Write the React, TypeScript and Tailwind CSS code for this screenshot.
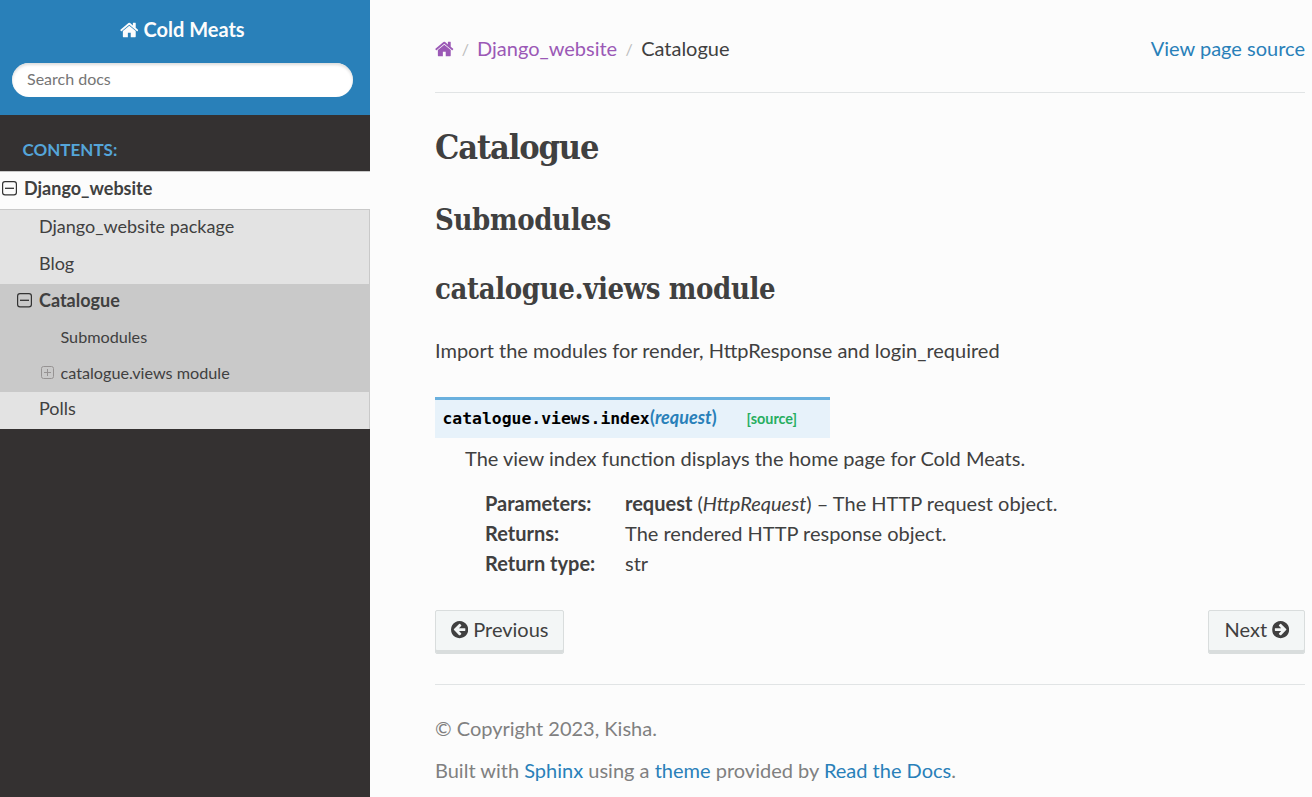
import React from "react";

const HOME =
  "M1408 992v480q0 26-19 45t-45 19h-384v-384h-256v384h-384q-26 0-45-19t-19-45v-480q0-1 .5-3t.5-3l575-474 575 474q1 2 1 6zm223-69l-62 74q-8 9-21 11h-3q-13 0-21-7l-692-577-692 577q-12 8-24 7-13-2-21-11l-62-74q-8-10-7-23.5t11-21.5l719-599q32-26 76-26t76 26l244 204v-195q0-14 9-23t23-9h192q14 0 23 9t9 23v408l219 182q10 8 11 21.5t-7 23.5z";
const ARROW =
  "M1408 960v-128q0-26-19-45t-45-19h-502l189-189q19-19 19-45t-19-45l-91-91q-18-18-45-18t-45 18l-362 362-91 91q-18 18-18 45t18 45l91 91 362 362q18 18 45 18t45-18l91-91q18-18 18-45t-18-45l-189-189h502q26 0 45-19t19-45zm256-64q0 209-103 385.5t-279.5 279.5-385.5 103-385.5-103-279.5-279.5-103-385.5 103-385.5 279.5-279.5 385.5-103 385.5 103 279.5 279.5 103 385.5z";

function HomeIcon({ className = "" }: { className?: string }) {
  return (
    <svg viewBox="0 0 1664 1792" className={`h-5 w-[18.6px] shrink-0 fill-current ${className}`}>
      <path d={HOME} />
    </svg>
  );
}

function ArrowIcon({ className = "" }: { className?: string }) {
  return (
    <svg viewBox="128 128 1536 1536" className={`size-[17.2px] shrink-0 fill-current ${className}`}>
      <path d={ARROW} />
    </svg>
  );
}

function Toggle({ open }: { open: boolean }) {
  return open ? (
    <svg viewBox="0 0 15 15" className="size-[15px] shrink-0 text-[#333333]" fill="none" stroke="currentColor">
      <rect x="0.6" y="0.6" width="13.8" height="13.3" rx="2.4" strokeWidth="1.2" />
      <path d="M3 7.3h9" strokeWidth="1.3" />
    </svg>
  ) : (
    <svg viewBox="0 0 13 13" className="size-[13px] shrink-0 text-[#969393]" fill="none" stroke="currentColor">
      <rect x="0.5" y="0.5" width="12" height="12" rx="2" />
      <path d="M3 6.5h7M6.5 3v7" />
    </svg>
  );
}

function Sidebar() {
  return (
    <nav className="flex w-[370px] shrink-0 flex-col bg-[#343131] text-lg text-[#404040]">
      <header className="h-[115px] bg-[#2980b9] pt-[15px]">
        <a className="flex h-[30px] w-[364.5px] items-center justify-center gap-[5px] text-xl font-bold text-[#fcfcfc]">
          <HomeIcon />
          <span className="pb-0.5">Cold Meats</span>
        </a>
        <input
          placeholder="Search docs"
          className="mt-[18px] ml-3 block h-[34px] w-[341px] rounded-full bg-white px-[15px] pb-[3px] text-base shadow-[inset_0_2px_3px_#ddd] placeholder:text-[#757575]"
        />
      </header>
      <p className="flex h-14 items-center pt-[15px] pl-[22.5px] text-[17px] font-bold text-[#55a5d9]">CONTENTS:</p>
      <a className="flex h-[38px] items-center gap-[7px] border-t border-[#c9c9c9] bg-[#fcfcfc] pb-[5px] pl-[2px] font-bold">
        <Toggle open />
        <span>Django_website</span>
      </a>
      <div className="flex h-[75px] flex-col border-t border-r border-[#c9c9c9] bg-[#e3e3e3] pl-[39px]">
        <a className="flex h-[37px] items-center pb-[5px]">Django_website package</a>
        <a className="flex h-[37px] items-center pb-[5px]">Blog</a>
      </div>
      <div className="h-[108px] bg-[#c9c9c9] text-[16.2px]">
        <a className="flex h-9 items-center gap-[7px] pb-[4px] pl-[17px] text-lg font-bold">
          <Toggle open />
          <span className="pb-px">Catalogue</span>
        </a>
        <a className="flex h-9 items-center pb-[3px] pl-[60.5px]">Submodules</a>
        <a className="flex h-9 items-center gap-[6.5px] pb-[3px] pl-[41px]">
          <Toggle open={false} />
          <span>catalogue.views module</span>
        </a>
      </div>
      <a className="flex h-[37px] items-center border-r border-[#c9c9c9] bg-[#e3e3e3] pb-[5px] pl-[39px]">Polls</a>
    </nav>
  );
}

const fields = [
  { name: "Parameters:", body: <><strong>request</strong> (<em>HttpRequest</em>) – The HTTP request object.</> },
  { name: "Returns:", body: "The rendered HTTP response object." },
  { name: "Return type:", body: "str" },
];

const slab = "font-['Roboto_Slab','DejaVu_Serif',serif] font-bold [font-stretch:condensed]";
const button =
  "flex h-11 items-center gap-[5px] rounded-[2px] border border-[#d9dddd] bg-[#f3f6f6] pb-1 shadow-[inset_0_-3px_0_#d9dddd]";

export default function App() {
  return (
    <div className="flex h-[797px] w-[1312px] overflow-hidden bg-[#fcfcfc] font-['Lato','Liberation_Sans',sans-serif] text-xl text-[#404040]">
      <Sidebar />
      <main className="flex w-[935px] flex-col pl-[65px]">
        <div className="flex h-[93px] items-center justify-between border-b border-[#e1e4e5] pt-[3px]">
          <div className="flex items-center">
            <HomeIcon className="mt-0.5 text-[#9b59b6]" />
            <span className="w-[23.4px] pt-0.5 text-center text-base text-[#bbbbbb]">/</span>
            <a className="text-[#9b59b6]">Django_website</a>
            <span className="w-6 pt-0.5 text-center text-base text-[#bbbbbb]">/</span>
            <span>Catalogue</span>
          </div>
          <a className="text-[#2980b9]">View page source</a>
        </div>
        <h1 className={`${slab} mt-[29px] h-[50px] whitespace-nowrap text-[34px] leading-[50px] tracking-[-1.1px]`}>Catalogue</h1>
        <h2 className={`${slab} mt-7 h-10 whitespace-nowrap text-[29px] leading-10 tracking-[-0.38px]`}>Submodules</h2>
        <h2 className={`${slab} mt-[29px] h-10 whitespace-nowrap text-[29px] leading-10 tracking-[-0.38px]`}>catalogue.views module</h2>
        <p className="mt-[26px] leading-[30px]">Import the modules for render, HttpResponse and login_required</p>
        <div className="mt-[32px] flex h-[41px] w-[395px] items-baseline border-t-3 border-[#6ab0de] bg-[#e7f2fa] pt-[3px] pl-[7.5px] text-lg font-bold">
          <code className="w-[207.5px] whitespace-nowrap font-['DejaVu_Sans_Mono',monospace] text-[16.4px] text-black">catalogue.views.index</code>
          <span className="text-[#2980b9]">(<em>request</em>)</span>
          <a className="ml-[30px] text-[14.4px] text-[#27ae60]">[source]</a>
        </div>
        <p className="mt-[5px] pl-[30px] leading-[30px]">The view index function displays the home page for Cold Meats.</p>
        <dl className="mt-[15px] grid grid-cols-[140px_1fr] pl-[50px] leading-[30px]">
          {fields.map((f) => (
            <React.Fragment key={f.name}>
              <dt className="font-bold">{f.name}</dt>
              <dd>{f.body}</dd>
            </React.Fragment>
          ))}
        </dl>
        <div className="mt-[32px] flex justify-between">
          <a className={`${button} w-[129px] pl-[15px]`}><ArrowIcon /><span className="pb-0.5">Previous</span></a>
          <a className={`${button} w-[97px] pl-[15.6px]`}><span className="pb-0.5">Next</span><ArrowIcon className="-scale-x-100" /></a>
        </div>
        <footer className="mt-[30px] border-t border-[#e1e4e5] pt-[28px] leading-[30px] text-[#808080]">
          <p>© Copyright 2023, Kisha.</p>
          <p className="mt-3">
            Built with <a className="text-[#2980b9]">Sphinx</a> using a <a className="text-[#2980b9]">theme</a> provided by{" "}
            <a className="text-[#2980b9]">Read the Docs</a>.
          </p>
        </footer>
      </main>
    </div>
  );
}
